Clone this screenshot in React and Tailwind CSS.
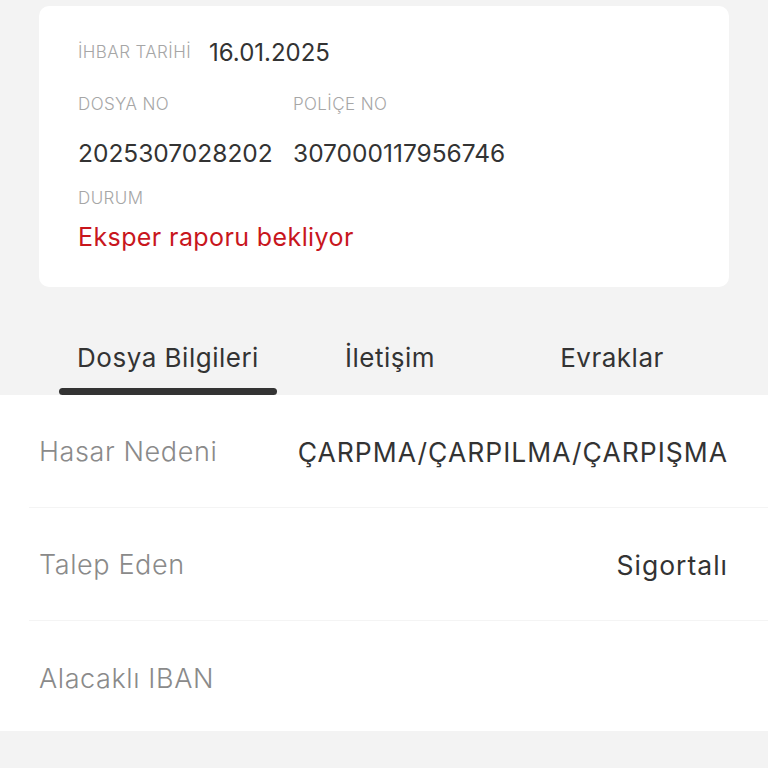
export default function App() {
  const rows = [
    { label: "Hasar Nedeni", value: "ÇARPMA/ÇARPILMA/ÇARPIŞMA" },
    { label: "Talep Eden", value: "Sigortalı" },
    { label: "Alacaklı IBAN", value: "" },
  ];

  return (
    <div
      className="w-[768px] h-[768px] overflow-hidden bg-[#f3f3f3]"
      style={{ fontFamily: "Inter, 'Noto Sans', sans-serif" }}
    >
      {/* summary card */}
      <div className="pt-[6px] px-[39px]">
        <div className="bg-white rounded-[10px] h-[281px] pl-[39px] pt-[29px]">
          <div className="flex items-center h-[36px]">
            <span className="text-[17px] font-light text-[#a6a6a6] w-[131px] tracking-[0.4px]">İHBAR TARİHİ</span>
            <span className="text-[24px] text-[#333]">16.01.2025</span>
          </div>
          <div className="flex mt-[19px] h-[30px] items-center">
            <span className="text-[17px] font-light text-[#a6a6a6] w-[215px] tracking-[0.4px]">DOSYA NO</span>
            <span className="text-[17px] font-light text-[#a6a6a6] tracking-[0.4px]">POLİÇE NO</span>
          </div>
          <div className="flex mt-[18px] h-[30px] items-center">
            <span className="text-[24.5px] text-[#333] w-[215px]">2025307028202</span>
            <span className="text-[24.5px] text-[#333]">307000117956746</span>
          </div>
          <div className="flex mt-[16px] h-[30px] items-center">
            <span className="text-[17px] font-light text-[#a6a6a6] tracking-[0.4px]">DURUM</span>
          </div>
          <div className="flex mt-[6px] h-[36px] items-center">
            <span className="text-[25px] text-[#c8161d] tracking-[0.4px]">Eksper raporu bekliyor</span>
          </div>
        </div>
      </div>

      {/* tabs */}
      <div className="mt-[43px] ml-[59px] w-[662px] grid grid-cols-3 gap-[4px]">
        {["Dosya Bilgileri", "İletişim", "Evraklar"].map((t, i) => (
          <div key={t} className="flex flex-col items-center">
            <span className="h-[58px] flex items-center text-[26px] tracking-[0.5px] text-[#333] pb-[4px]">{t}</span>
            <div className={i === 0 ? "w-full h-[7px] rounded-full bg-[#333]" : "w-full h-[7px]"} />
          </div>
        ))}
      </div>

      {/* details */}
      <div className="bg-white h-[336px] pl-[39px]">
        {rows.map((r, i) => (
          <div
            key={r.label}
            className={
              "flex items-center justify-between h-[113px] pr-[40px] " +
              (i < rows.length - 1 ? "border-b border-[#f4f4f4] -ml-[10px] pl-[10px]" : "")
            }
          >
            <span className="text-[27px] font-light text-[#8a8a8a] tracking-[0.6px] pt-[3px]">{r.label}</span>
            <span className="text-[26.5px] text-[#333] tracking-[1px] pt-[3px]">{r.value}</span>
          </div>
        ))}
      </div>
    </div>
  );
}
